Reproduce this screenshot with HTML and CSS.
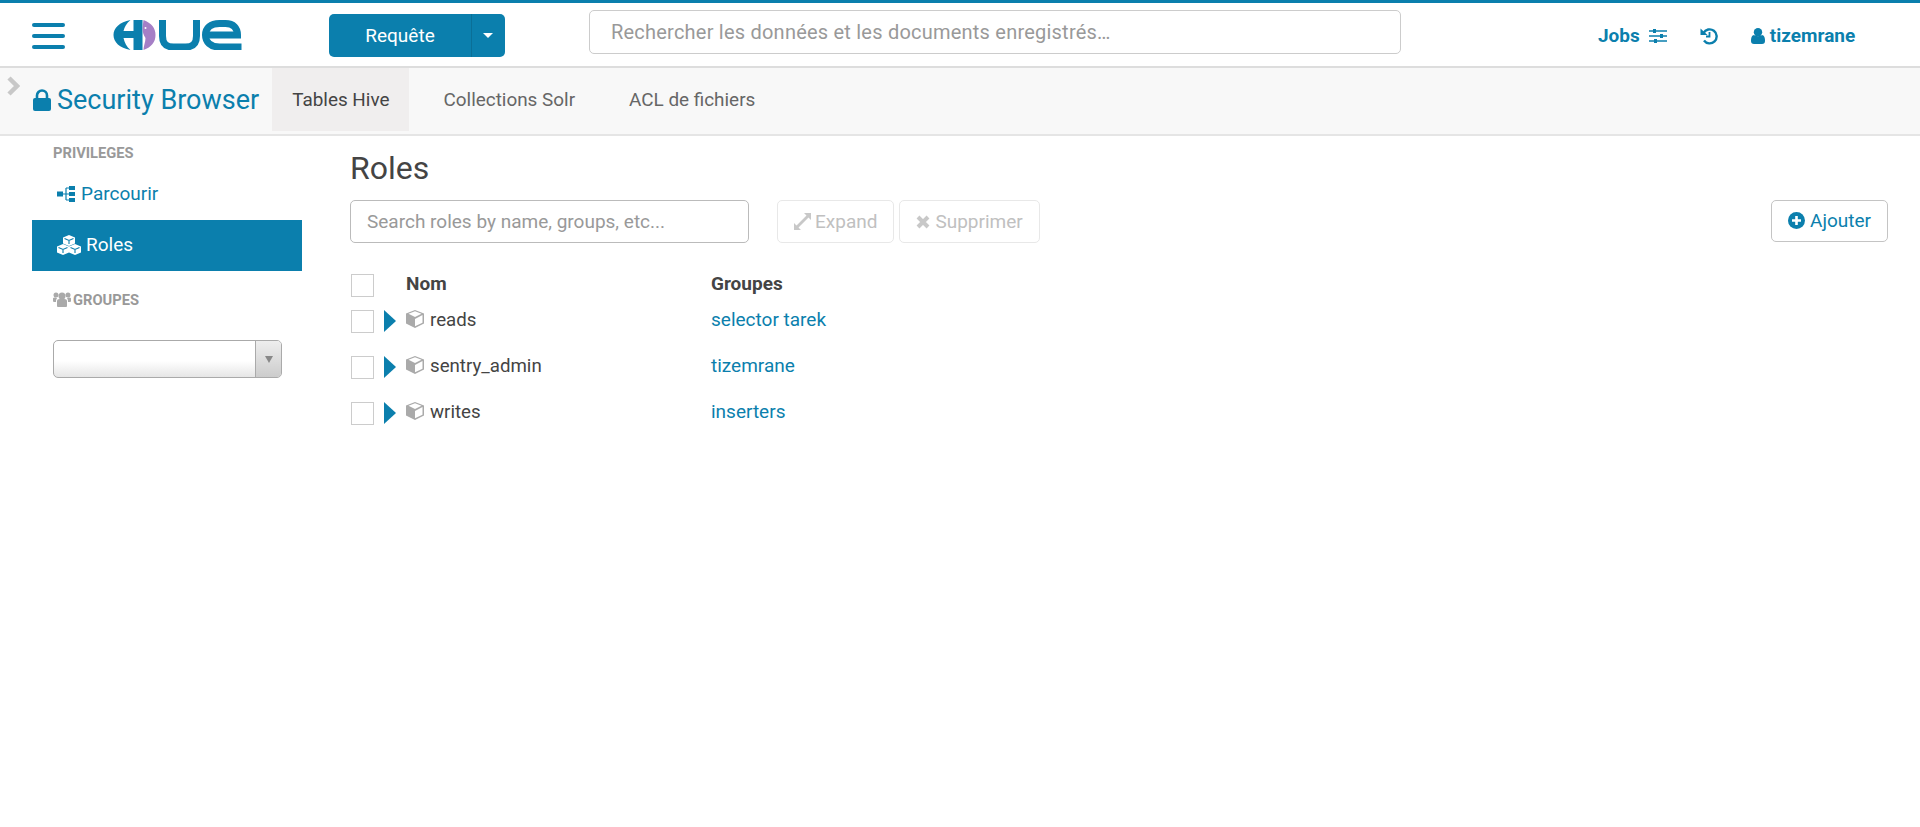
FILE: index.html

```html
<!DOCTYPE html>
<html lang="fr">
<head>
    <meta charset="UTF-8">
    <meta name="viewport" content="width=device-width, initial-scale=1.0">
    <title>Hue - Security Browser</title>
    <link rel="stylesheet" href="styles.css">
</head>
<body>
    <div class="topbar">
        <div class="burger"><span></span><span></span><span></span></div>
        <svg class="logo" viewBox="0 0 130 30" width="131" height="30" aria-label="Hue">
            <path d="M17 0C6 2 0 8 0 15s6 13 17 15c-4-3-6-8-7-12h10v12h9V0h-9v11H10c1-4 3-8 7-11z" fill="#0b7fad"/>
            <path d="M30 0c8 3 12 8 12 15s-4 12-12 15c0-4 2-8 2-12-2-3-3-6-3-10z" fill="#a57fc6"/>
            <circle cx="32" cy="8" r="1" fill="#fff"/>
            <path d="M49 0v16c0 8 4 11 11 11h12c7 0 11-3 11-11V0" fill="none" stroke="#0b7fad" stroke-width="7"/>
            <path d="M128 27H106c-9 0-14-5-14-12s5-11.500 14-11.500h6c8 0 12 4.500 12 11.500H93" fill="none" stroke="#0b7fad" stroke-width="7"/>
        </svg>
        <div class="query-btn">
            <span class="query-label">Requête</span>
            <span class="query-caret"><i class="caret"></i></span>
        </div>
        <div class="global-search">Rechercher les données et les documents enregistrés…</div>
        <div class="top-links">
            <span class="top-link">Jobs
                <svg class="ico" viewBox="0 0 18 16" width="18" height="16"><path d="M0 3h18M0 8h18M0 13h18" stroke="#0b7fad" stroke-width="1.4"/><path d="M4 1h3v4H4zM11 6h3v4h-3zM5 11h3v4H5z" fill="#0b7fad"/></svg>
            </span>
            <svg class="ico history" viewBox="0 0 18 18" width="18" height="18"><path d="M3.500 6A7 7 0 1 1 4 13.500" fill="none" stroke="#0b7fad" stroke-width="2.400"/><path d="M0.500 1.500 7.500 8H0.500z" fill="#0b7fad"/><path d="M9.500 5v4.500H6" fill="none" stroke="#0b7fad" stroke-width="1.800"/></svg>
            <span class="top-link user">
                <svg class="ico" viewBox="0 0 14 16" width="14" height="16"><circle cx="7" cy="4.200" r="4.200" fill="#0b7fad"/><path d="M0 13c0-4 1-5.500 3-6 2 1.500 6 1.500 8 0 2 .5 3 2 3 6 0 2-1 3-3 3H3c-2 0-3-1-3-3z" fill="#0b7fad"/></svg>
                tizemrane
            </span>
        </div>
    </div>

    <div class="subbar">
        <svg class="side-toggle" viewBox="0 0 14 20" width="14" height="20"><path d="M3 2l8 8-8 8" fill="none" stroke="#c8c8c8" stroke-width="4.500"/></svg>
        <div class="app-title">
            <svg viewBox="0 0 18 22" width="18" height="22"><path d="M4 10V6.500a5 5 0 0 1 10 0V10" fill="none" stroke="#0b7fad" stroke-width="2.600"/><rect y="9" width="18" height="13" rx="2" fill="#0b7fad"/></svg>
            Security Browser
        </div>
        <div class="tabs">
            <a class="tab active">Tables Hive</a>
            <a class="tab">Collections Solr</a>
            <a class="tab">ACL de fichiers</a>
        </div>
    </div>

    <div class="page">
        <div class="sidebar">
            <div class="nav-head">PRIVILEGES</div>
            <a class="nav-item">
                <svg viewBox="0 0 18 18" width="18" height="18"><path d="M0 6.500h6v5H0zM12 1h6v4h-6zM12 7h6v4h-6zM12 13h6v4h-6z" fill="#0b7fad"/><path d="M6 9h6M9 3v12M9 3h3M9 15h3" stroke="#0b7fad" fill="none" stroke-width="1.200"/></svg>
                Parcourir
            </a>
            <a class="nav-item selected">
                <svg viewBox="0 0 24 20" width="24" height="20"><path d="M12 0l6 2.500v6L12 11 6 8.500v-6zM6 9l6 2.500v6L6 20 0 17.500v-6zM18 9l6 2.500v6L18 20l-6-2.500v-6z" fill="#fff"/><path d="M7.500 3.500 12 5.500l4.500-2M12 5.500V9M1.500 12.500 6 14.500l4.500-2M6 14.500V18M13.500 12.500l4.500 2 4.500-2M18 14.500V18" stroke="#0b7fad" fill="none" stroke-width="1.100"/></svg>
                Roles
            </a>
            <div class="nav-head groups">
                <svg viewBox="0 0 18 15" width="18" height="15"><circle cx="9" cy="4" r="3.500" fill="#aaa"/><circle cx="3" cy="3" r="2.500" fill="#aaa"/><circle cx="15" cy="3" r="2.500" fill="#aaa"/><path d="M4 9c0-2 2-2 5-2s5 0 5 2v5c0 1-1 1-2 1H6c-1 0-2 0-2-1zM0 6.500c0-1 1-1 3-1l1 1c-1 1-1 2-1 3.500H1c-1 0-1-1-1-1zM18 6.500c0-1-1-1-3-1l-1 1c1 1 1 2 1 3.500h2c1 0 1-1 1-1z" fill="#aaa"/></svg>
                GROUPES
            </div>
            <div class="chosen">
                <span class="chosen-arrow"><i></i></span>
            </div>
        </div>

        <div class="main">
            <h1>Roles</h1>
            <div class="toolbar">
                <div class="role-search">Search roles by name, groups, etc...</div>
                <div class="tool-btn disabled first">
                    <svg viewBox="0 0 17 17" width="17" height="17"><path d="M10 0h7v7l-2.500-2.500L4.500 14.500 7 17H0v-7l2.500 2.500L12.500 2.500z" fill="#c8c8c8"/></svg>
                    Expand
                </div>
                <div class="tool-btn disabled second">
                    <svg viewBox="0 0 14 14" width="14" height="14"><path d="M2 2l10 10M12 2 2 12" stroke="#c8c8c8" stroke-width="4"/></svg>
                    Supprimer
                </div>
                <div class="tool-btn add">
                    <svg viewBox="0 0 17 17" width="17" height="17"><circle cx="8.500" cy="8.500" r="8.500" fill="#0b7fad"/><path d="M8.500 4v9M4 8.500h9" stroke="#fff" stroke-width="2.600"/></svg>
                    Ajouter
                </div>
            </div>

            <div class="roles">
                <div class="row head">
                    <span class="check"></span>
                    <span class="col-name">Nom</span>
                    <span class="col-groups">Groupes</span>
                </div>
                <div class="row">
                    <span class="check"></span>
                    <div class="col-name">
                        <i class="arrow"></i>
                        <svg class="cube" viewBox="0 0 18 18" width="18" height="18"><path d="M9 0l9 3.500v10L9 18l-9-4.500v-10z" fill="#aaa"/><path d="M9 9l7.500-4v7.800L9 16.300zM2.500 3.700 9 1.300l6.500 2.400L9 7z" fill="#fff"/></svg>
                        <span class="role-name">reads</span>
                    </div>
                    <a class="col-groups">selector tarek</a>
                </div>
                <div class="row">
                    <span class="check"></span>
                    <div class="col-name">
                        <i class="arrow"></i>
                        <svg class="cube" viewBox="0 0 18 18" width="18" height="18"><path d="M9 0l9 3.500v10L9 18l-9-4.500v-10z" fill="#aaa"/><path d="M9 9l7.500-4v7.800L9 16.300zM2.500 3.700 9 1.300l6.500 2.400L9 7z" fill="#fff"/></svg>
                        <span class="role-name">sentry_admin</span>
                    </div>
                    <a class="col-groups">tizemrane</a>
                </div>
                <div class="row">
                    <span class="check"></span>
                    <div class="col-name">
                        <i class="arrow"></i>
                        <svg class="cube" viewBox="0 0 18 18" width="18" height="18"><path d="M9 0l9 3.500v10L9 18l-9-4.500v-10z" fill="#aaa"/><path d="M9 9l7.500-4v7.800L9 16.300zM2.500 3.700 9 1.300l6.500 2.400L9 7z" fill="#fff"/></svg>
                        <span class="role-name">writes</span>
                    </div>
                    <a class="col-groups">inserters</a>
                </div>
            </div>
        </div>
    </div>
</body>
</html>
```

FILE: styles.css

```css
* { box-sizing: border-box; }
body { margin: 0; font-family: Roboto, "Open Sans", sans-serif; font-size: 19px; color: #444; background: #fff; }
a { color: #0b7fad; }

.topbar { height: 68px; border-top: 3px solid #0b7fad; border-bottom: 2px solid #ddd; display: flex; align-items: center; padding-left: 32px; }
.burger { width: 33px; display: flex; flex-direction: column; gap: 7px; margin-top: 2px; }
.burger span { height: 4px; border-radius: 2px; background: #0b7fad; }
.logo { margin-left: 48px; }
.query-btn { margin-left: 85px; margin-top: 1px; width: 176px; height: 43px; display: flex; background: #0b7fad; border-radius: 5px; color: #fff; }
.query-label { flex: 1; display: flex; align-items: center; justify-content: center; }
.query-caret { width: 34px; padding-right: 2px; display: flex; align-items: center; justify-content: center; border-left: 1px solid #0a6f97; }
.caret { border-top: 5px solid #fff; border-left: 5px solid transparent; border-right: 5px solid transparent; }
.global-search { margin-left: 84px; margin-top: -6px; width: 812px; height: 44px; border: 1px solid #ccc; border-radius: 5px; padding-left: 21px; display: flex; align-items: center; font-size: 20px; letter-spacing: .22px; color: #999; }
.top-links { margin-left: 197px; margin-top: 2px; display: flex; align-items: center; color: #0b7fad; font-weight: 700; }
.top-link { display: flex; align-items: center; gap: 9px; }
.history { margin-left: 33px; margin-right: 33px; }
.user { gap: 5px; }

.subbar { position: relative; height: 68px; background: #f8f8f8; border-bottom: 2px solid #e5e5e5; display: flex; align-items: flex-start; padding-left: 33px; }
.side-toggle { position: absolute; left: 6px; top: 8px; }
.app-title { height: 63px; display: flex; align-items: center; gap: 6px; font-size: 27px; color: #0b7fad; }
.tabs { display: flex; gap: 14px; margin-left: 13px; font-size: 18.900px; }
.tab { height: 63px; padding: 0 20px; display: flex; align-items: center; color: #666; }
.tab.active { background: #f0eeee; color: #444; }

.page { display: flex; padding: 0 32px; }
.sidebar { width: 270px; flex: none; }
.nav-head { font-size: 14.700px; font-weight: 700; color: #999; padding: 1px 21px 0; height: 32px; display: flex; align-items: center; gap: 2px; }
.nav-item { height: 51px; padding-left: 25px; display: flex; align-items: center; gap: 6px; }
.nav-item.selected { background: #0b7fad; color: #fff; margin-top: 1px; gap: 5px; padding-bottom: 2px; }
.nav-head.groups { margin-top: 12px; }
.chosen { position: relative; margin: 25px 0 0 21px; width: 229px; height: 38px; border: 1px solid #aaa; border-radius: 5px; background: linear-gradient(#fff 55%, #e6e6e6); }
.chosen-arrow { position: absolute; top: 0; right: 0; width: 26px; height: 100%; border-left: 1px solid #aaa; display: flex; align-items: center; justify-content: center; background: linear-gradient(#eee, #ccc); border-radius: 0 4px 4px 0; }
.chosen-arrow i { border-top: 7px solid #888; border-left: 4px solid transparent; border-right: 4px solid transparent; }

.main { flex: 1; margin-left: 48px; }
h1 { margin: 13px 0 0; font-size: 32px; font-weight: 400; line-height: 38px; color: #444; }
.toolbar { display: flex; align-items: flex-start; margin-top: 13px; }
.role-search { width: 399px; height: 43px; border: 1px solid #bbb; border-radius: 5px; padding-left: 16px; display: flex; align-items: center; color: #999; }
.tool-btn { height: 43px; padding: 0 16px; display: flex; align-items: center; gap: 4px; border: 1px solid #c4c4c4; border-radius: 5px; color: #0b7fad; }
.tool-btn.disabled { border-color: #e8e8e8; color: #c0c0c0; margin-left: 5px; }
.tool-btn.first { margin-left: 28px; }
.tool-btn.second { gap: 5px; }
.tool-btn.add { margin-left: auto; padding: 0 16px 2px; gap: 5px; height: 42px; }

.roles { margin-top: 31px; }
.row { display: flex; align-items: flex-start; height: 46px; }
.row.head { height: 36px; font-weight: 700; line-height: 20px; }
.check { width: 23px; height: 23px; margin-left: 1px; border: 1px solid #ccc; background: #fff; flex: none; }
.col-name { width: 327px; margin-left: 10px; display: flex; align-items: flex-start; line-height: 20px; }
.head .col-name { display: block; margin-left: 32px; width: 305px; }
.col-groups { line-height: 20px; }
.arrow { width: 0; height: 0; border-left: 12px solid #0b7fad; border-top: 11px solid transparent; border-bottom: 11px solid transparent; }
.cube { margin-left: 10px; }
.role-name { margin-left: 6px; font-size: 18.700px; }
```
